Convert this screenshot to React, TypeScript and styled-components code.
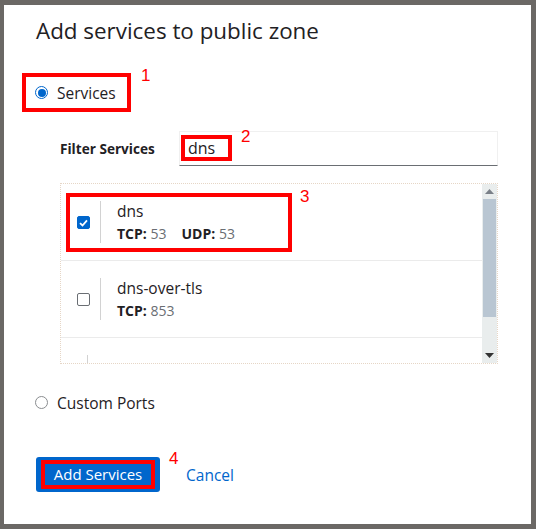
import React from "react";
import styled, { createGlobalStyle } from "styled-components";

const Global = createGlobalStyle`
  html, body { margin: 0; padding: 0; background: #6b6865; }
  body { font-family: "Open Sans", "Liberation Sans", sans-serif; }
  * { box-sizing: border-box; }
`;

const Frame = styled.div`
  width: 536px;
  height: 529px;
  padding: 5px 5px 5px 4px;
  background: #6b6865;
`;

const Dialog = styled.div`
  width: 527px;
  height: 519px;
  background: #ffffff;
  display: flex;
  flex-direction: column;
  align-items: flex-start;
  padding-top: 11px;
  color: #151515;
`;

const Title = styled.h1`
  margin: 0 0 0 32px;
  font-size: 22.4px;
  line-height: 30px;
  font-weight: 400;
  color: #1f2124;
`;

const Annotated = styled.div<{ $mt: number; $ml: number }>`
  position: relative;
  margin: ${(p) => p.$mt}px 0 0 ${(p) => p.$ml}px;
`;

const Mark = styled.span<{ $x: number; $y: number }>`
  position: absolute;
  left: ${(p) => p.$x}px;
  top: ${(p) => p.$y}px;
  color: #ff0000;
  font-family: "Liberation Sans", sans-serif;
  font-size: 17px;
  line-height: 17px;
`;

const RedBox = styled.div`
  border: 4px solid #ff0000;
`;

const RadioRow = styled.label<{ $ml: number; $mt: number }>`
  display: flex;
  align-items: center;
  gap: 9px;
  margin: ${(p) => p.$mt}px 0 0 ${(p) => p.$ml}px;
  height: 31px;
  font-size: 15.5px;
  color: #1f2124;
`;

const ServicesBox = styled(RedBox)`
  width: 109px;
  height: 39px;
  padding-left: 9px;
  display: flex;
  align-items: center;
`;

const Radio = styled.span<{ $on?: boolean }>`
  width: 13px;
  height: 13px;
  border-radius: 50%;
  border: 1px solid ${(p) => (p.$on ? "#0066cc" : "#8a8d90")};
  display: flex;
  align-items: center;
  justify-content: center;
  &::after {
    content: "";
    display: ${(p) => (p.$on ? "block" : "none")};
    width: 8px;
    height: 8px;
    border-radius: 50%;
    background: #0066cc;
  }
`;

const FilterRow = styled.div`
  display: flex;
  align-items: center;
  margin: 19px 0 0 56px;
`;

const FilterLabel = styled.label`
  width: 119px;
  font-size: 13.6px;
  font-weight: 700;
  color: #1f2124;
`;

const Input = styled.div`
  width: 319px;
  height: 35px;
  border: 1px solid #f0f0f0;
  border-bottom-color: #6a6e73;
  padding: 3px 0 0 1px;
`;

const InputValueBox = styled(RedBox)`
  width: 51px;
  height: 26px;
  padding-left: 3px;
  font-size: 16px;
  line-height: 18px;
  color: #1f2124;
`;

const List = styled.div`
  width: 438px;
  height: 181px;
  border: 1px dotted #e6d6c6;
  display: flex;
`;

const Rows = styled.div`
  flex: 1;
  overflow: hidden;
`;

const Row = styled.div`
  height: 77px;
  padding: 9px 0 0 5px;
  border-bottom: 1px solid #ebebeb;
  &:last-child { border-bottom: none; }
`;

const RowBox = styled.div<{ $sel?: boolean }>`
  display: flex;
  width: 226px;
  height: 59px;
  border: 4px solid ${(p) => (p.$sel ? "#ff0000" : "transparent")};
  padding-left: 7px;
`;

const CheckCell = styled.div`
  display: flex;
  align-items: center;
  padding-right: 10px;
`;

const Check = styled.span<{ $on?: boolean }>`
  width: 13px;
  height: 13px;
  border-radius: 2px;
  border: 1px solid ${(p) => (p.$on ? "#0066cc" : "#6a6e73")};
  background: ${(p) => (p.$on ? "#0066cc" : "#fff")};
  display: flex;
  align-items: center;
  justify-content: center;
`;

const Divider = styled.div`
  width: 1px;
  margin: 4px 0 5px;
  background: #d2d2d2;
`;

const Info = styled.div`
  padding: 3px 0 0 16px;
  display: flex;
  flex-direction: column;
`;

const Name = styled.div`
  font-size: 15.5px;
  line-height: 22px;
  color: #1f2124;
`;

const Ports = styled.div`
  display: flex;
  gap: 15px;
  font-size: 14px;
  line-height: 24px;
`;

const Port = styled.span`
  color: #6a6e73;
  b { color: #1f2124; font-weight: 700; }
`;

const Scrollbar = styled.div`
  width: 15px;
  background: #e9eded;
  display: flex;
  flex-direction: column;
  align-items: center;
`;

const Arrow = styled.div`
  height: 15px;
  display: flex;
  align-items: center;
  justify-content: center;
`;

const Track = styled.div`
  flex: 1;
  width: 100%;
  padding: 0 1px;
`;

const Thumb = styled.div`
  height: 118px;
  background: #b9c6d2;
`;

const Footer = styled.div`
  display: flex;
  align-items: center;
  gap: 26px;
`;

const Primary = styled.button`
  width: 124px;
  height: 35px;
  padding: 3px 5px;
  background: #0066cc;
  border: none;
  border-radius: 3px;
  font-family: inherit;
`;

const PrimaryInner = styled(RedBox)`
  height: 29px;
  color: #fff;
  font-size: 15px;
  line-height: 21px;
  text-align: center;
`;

const LinkButton = styled.button`
  background: none;
  border: none;
  padding: 0;
  color: #0066cc;
  font-family: inherit;
  font-size: 15.5px;
`;

const CheckIcon = () => (
  <svg width="9" height="8" viewBox="0 0 9 8">
    <path d="M1 4.2 L3.5 6.5 L8 1.3" stroke="#fff" strokeWidth="1.8" fill="none" />
  </svg>
);

const ArrowIcon = ({ up }: { up?: boolean }) => (
  <svg width="9" height="5" viewBox="0 0 9 5">
    <path d={up ? "M0 5 L4.5 0 L9 5 Z" : "M0 0 L9 0 L4.5 5 Z"} fill={up ? "#7a8088" : "#333"} />
  </svg>
);

const services = [
  { name: "dns", ports: [["TCP", "53"], ["UDP", "53"]], sel: true },
  { name: "dns-over-tls", ports: [["TCP", "853"]], sel: false },
  { name: "", ports: [], sel: false },
];

export default function App() {
  return (
    <>
      <Global />
      <Frame>
        <Dialog>
          <Title>Add services to public zone</Title>

          <Annotated $mt={27} $ml={18}>
            <ServicesBox>
              <RadioRow $ml={0} $mt={0}>
                <Radio $on />
                Services
              </RadioRow>
            </ServicesBox>
            <Mark $x={119} $y={-6}>1</Mark>
          </Annotated>

          <FilterRow>
            <FilterLabel>Filter Services</FilterLabel>
            <Annotated $mt={0} $ml={0}>
              <Input>
                <InputValueBox>dns</InputValueBox>
              </Input>
              <Mark $x={62} $y={-3}>2</Mark>
            </Annotated>
          </FilterRow>

          <Annotated $mt={17} $ml={56}>
            <List>
              <Rows>
                {services.map((s, i) => (
                  <Row key={i}>
                    <RowBox $sel={s.sel}>
                      <CheckCell>
                        {s.name && <Check $on={s.sel}>{s.sel && <CheckIcon />}</Check>}
                      </CheckCell>
                      <Divider />
                      <Info>
                        <Name>{s.name}</Name>
                        <Ports>
                          {s.ports.map(([k, v]) => (
                            <Port key={k}>
                              <b>{k}:</b> {v}
                            </Port>
                          ))}
                        </Ports>
                      </Info>
                    </RowBox>
                  </Row>
                ))}
              </Rows>
              <Scrollbar>
                <Arrow><ArrowIcon up /></Arrow>
                <Track><Thumb /></Track>
                <Arrow><ArrowIcon /></Arrow>
              </Scrollbar>
            </List>
            <Mark $x={240} $y={5}>3</Mark>
          </Annotated>

          <RadioRow $ml={31} $mt={23}>
            <Radio />
            Custom Ports
          </RadioRow>

          <Annotated $mt={39} $ml={32}>
            <Footer>
              <Primary>
                <PrimaryInner>Add Services</PrimaryInner>
              </Primary>
              <LinkButton>Cancel</LinkButton>
            </Footer>
            <Mark $x={133} $y={-7}>4</Mark>
          </Annotated>
        </Dialog>
      </Frame>
    </>
  );
}
